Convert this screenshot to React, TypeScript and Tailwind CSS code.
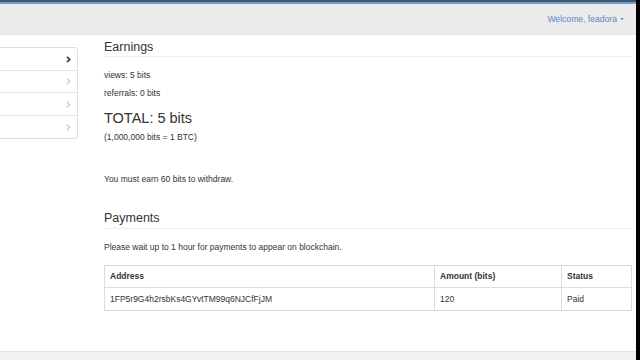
const font = { fontFamily: '"Liberation Sans", Arial, sans-serif' };

const Chevron = ({ dark }: { dark?: boolean }) => (
  <svg width="5" height="7" viewBox="0 0 5 7" className="shrink-0">
    <path
      d="M1 0.8 L3.8 3.5 L1 6.2"
      fill="none"
      stroke={dark ? '#444' : '#c8c8c8'}
      strokeWidth={dark ? 1.8 : 1.2}
    />
  </svg>
);

const sideRows = ['h-[23px]', 'h-[22px]', 'h-[23px]', 'h-[22px]'];

export default function App() {
  return (
    <div className="w-[640px] h-[360px] flex bg-white overflow-hidden text-[#333]" style={font}>
      <div className="w-[636px] h-full flex flex-col">
        {/* top strip + navbar */}
        <div className="h-[2px] bg-[#36597c]" />
        <div className="h-[2px] bg-[#7e9dbb]" />
        <div className="h-[31px] bg-[#ebebeb] border-b border-[#e2e2e2] flex items-center justify-end pr-[12px]">
          <span className="text-[8.6px] text-[#5a88c4] flex items-center gap-[3px]">
            Welcome, feadora
            <span className="w-0 h-0 border-l-[2.5px] border-r-[2.5px] border-t-[2.5px] border-l-transparent border-r-transparent border-t-[#5a88c4]" />
          </span>
        </div>

        <div className="flex-1 flex">
          {/* sidebar */}
          <div className="w-[78px] mt-[12px] self-start border border-l-0 border-[#dedede] rounded-r-[3px]">
            {sideRows.map((h, i) => (
              <div
                key={i}
                className={`${h} flex items-center justify-end pr-[6px] ${i < 3 ? 'border-b border-[#e6e6e6]' : ''}`}
              >
                <Chevron dark={i === 0} />
              </div>
            ))}
          </div>

          {/* main */}
          <div className="ml-[26px] w-[528px] flex flex-col">
            <h2 className="mt-[5px] text-[12.5px] leading-[15px] pb-[1px] border-b border-[#eeeeee] text-[#333]">
              Earnings
            </h2>
            <p className="mt-[12px] text-[8.5px] leading-[12px]">views: 5 bits</p>
            <p className="mt-[6px] text-[8.5px] leading-[12px]">referrals: 0 bits</p>
            <p className="mt-[11px] text-[14.5px] leading-[17px]">TOTAL: 5 bits</p>
            <p className="mt-[4px] text-[8.5px] leading-[12px]">(1,000,000 bits = 1 BTC)</p>
            <p className="mt-[30px] text-[8.5px] leading-[12px]">You must earn 60 bits to withdraw.</p>

            <h2 className="mt-[26px] text-[12.5px] leading-[15px] pb-[2px] border-b border-[#eeeeee]">
              Payments
            </h2>
            <p className="mt-[12px] text-[8.5px] leading-[12px]">
              Please wait up to 1 hour for payments to appear on blockchain.
            </p>

            <table className="mt-[12px] w-full border-collapse text-[8.5px]">
              <thead>
                <tr className="h-[22px]">
                  <th className="w-[330px] border border-[#dddddd] text-left font-bold px-[5px]">Address</th>
                  <th className="w-[127px] border border-[#dddddd] text-left font-bold px-[5px]">Amount (bits)</th>
                  <th className="border border-[#dddddd] text-left font-bold px-[5px]">Status</th>
                </tr>
              </thead>
              <tbody>
                <tr className="h-[23px]">
                  <td className="border border-[#dddddd] px-[5px]">1FP5r9G4h2rsbKs4GYvtTM99q6NJCfFjJM</td>
                  <td className="border border-[#dddddd] px-[5px]">120</td>
                  <td className="border border-[#dddddd] px-[5px]">Paid</td>
                </tr>
              </tbody>
            </table>
          </div>
        </div>

        <div className="h-[9px] bg-[#f2f2f2] border-t border-[#e4e4e4]" />
      </div>
      <div className="w-[4px] h-full bg-black" />
    </div>
  );
}
